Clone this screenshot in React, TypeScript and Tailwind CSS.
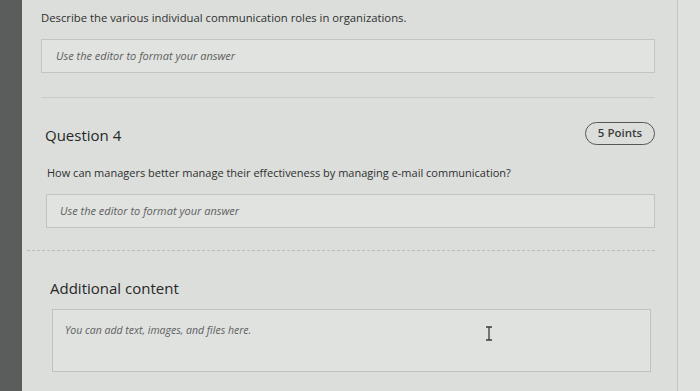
export default function App() {
  return (
    <div className="flex h-[391px] w-[700px] overflow-hidden bg-[#dcdedb] font-['Open_Sans',sans-serif] text-[#2e302f]">
      {/* dark screen bezel on the left */}
      <div className="w-[22px] shrink-0 bg-[#5b5d5c]" />

      <div className="flex w-[655px] shrink-0 flex-col pl-[19px] pr-[22px]">
        <p className="mt-[10px] text-[11.3px] leading-4">
          Describe the various individual communication roles in organizations.
        </p>

        <div className="mt-[13px] flex h-[34px] items-center border border-[#c2c4c1] bg-[#e1e3e0] px-[14px]">
          <span className="text-[11px] italic text-[#5e605f]">Use the editor to format your answer</span>
        </div>

        <div className="mt-[24px] border-t border-[#c8cac7]" />

        <div className="mt-[23px] flex items-center justify-between pl-[4px]">
          <h2 className="pt-[4px] text-[15px] leading-5 text-[#262827]">Question 4</h2>
          <span className="flex h-[23px] w-[70px] items-center justify-center rounded-full border border-[#555756] text-[11.5px] font-semibold text-[#3a3c3b]">
            5 Points
          </span>
        </div>

        <p className="mt-[20px] pl-[6px] text-[11px] leading-4">
          How can managers better manage their effectiveness by managing e-mail communication?
        </p>

        <div className="mt-[13px] ml-[5px] flex h-[34px] items-center border border-[#c2c4c1] bg-[#e1e3e0] px-[13px]">
          <span className="text-[11px] italic text-[#5e605f]">Use the editor to format your answer</span>
        </div>

        <div className="mt-[22px] -ml-[14px] border-t border-dashed border-[#b9bbb8]" />

        <h2 className="mt-[27px] pl-[9px] text-[15px] font-medium leading-5 text-[#262827]">Additional content</h2>

        <div className="relative mt-[11px] ml-[11px] mr-[4px] h-[63px] border border-[#c0c2bf] bg-[#e0e2df] px-[12px] pt-[12px] text-[10.5px] leading-4">
          <span className="italic text-[#5e605f]">You can add text, images, and files here.</span>
          {/* text cursor over the field */}
          <svg className="absolute left-[432px] top-[16px]" width="8" height="15" viewBox="0 0 8 15">
            <path d="M1 1h6M4 1v13M1 14h6" stroke="#3a3c3b" strokeWidth="1.3" fill="none" />
          </svg>
        </div>
      </div>

      <div className="w-px shrink-0 bg-[#c4c6c3]" />
      <div className="flex-1 bg-[#dfe1de]" />
    </div>
  )
}
